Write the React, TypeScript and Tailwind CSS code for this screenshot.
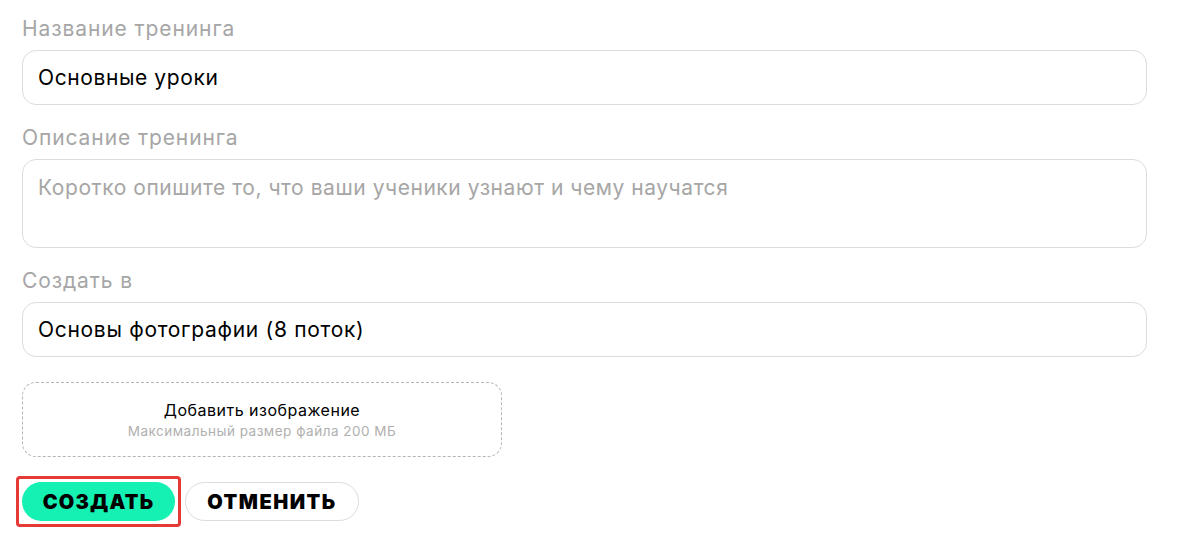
import React from 'react';

function Field({ label, children }: { label: string; children: React.ReactNode }) {
  return (
    <div className="flex flex-col gap-[7px]">
      <label className="text-[21px] leading-[28px] tracking-[0.9px] text-[#a6a6a6]">{label}</label>
      {children}
    </div>
  );
}

export default function App() {
  return (
    <div
      className="min-h-[546px] bg-white pl-[22px] pt-[15px]"
      style={{ fontFamily: 'Inter, "Noto Sans", sans-serif' }}
    >
      <div className="flex w-[1125px] flex-col gap-[19px]">
        <Field label="Название тренинга">
          <div className="flex h-[55px] items-center rounded-[14px] border border-[#dcdcdc] px-[15px] text-[21px] tracking-[0.6px] text-black">
            Основные уроки
          </div>
        </Field>

        <Field label="Описание тренинга">
          <div className="h-[89px] rounded-[14px] border border-[#dcdcdc] px-[15px] pt-[14px] text-[21px] leading-[28px] tracking-[0.55px] text-[#a6a6a6]">
            Коротко опишите то, что ваши ученики узнают и чему научатся
          </div>
        </Field>

        <Field label="Создать в">
          <div className="flex h-[55px] items-center rounded-[14px] border border-[#dcdcdc] px-[15px] text-[21px] tracking-[0.7px] text-black">
            Основы фотографии (8 поток)
          </div>
        </Field>
      </div>

      <div className="mt-[25px] flex h-[75px] w-[480px] flex-col items-center justify-center rounded-[14px] border border-dashed border-[#b5b5b5]">
        <span className="text-[16px] leading-[20px] tracking-[0.5px] text-black">Добавить изображение</span>
        <span className="mt-[3px] text-[13.5px] leading-[16px] tracking-[0.5px] text-[#b0b0b0]">
          Максимальный размер файла 200 МБ
        </span>
      </div>

      <div className="mt-[25px] flex items-center gap-[10px]">
        <div className="-m-[6px] rounded-[4px] border-[3px] border-[#e53935] p-[3px]">
          <button className="flex h-[39px] w-[153px] items-center justify-center rounded-full bg-[#14f1b3] text-[20px] font-black tracking-[1.2px] text-black">
            СОЗДАТЬ
          </button>
        </div>
        <button className="flex h-[39px] w-[174px] items-center justify-center rounded-full border border-[#dcdcdc] bg-white text-[20px] font-black tracking-[1.5px] text-black">
          ОТМЕНИТЬ
        </button>
      </div>
    </div>
  );
}
